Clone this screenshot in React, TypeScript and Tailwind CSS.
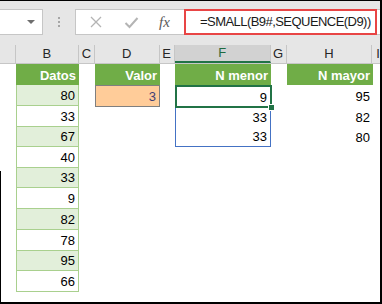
import React from 'react'

const rowHeights = [21, 21, 21, 20, 21, 20, 21, 21, 21, 20, 21]
const datos = [80, 33, 67, 40, 33, 9, 82, 78, 95, 66]
const menor = [9, 33, 33]
const mayor = [95, 82, 80]

const cellText = 'flex items-end justify-end pr-[3px] pb-[2px] leading-[15px] text-[13px]'

function HeaderCell({ label, width, selected }: { label: string; width: string; selected?: boolean }) {
  return (
    <div
      className={`${width} h-full flex items-center justify-center border-r border-[#c6c6c6] text-[13px] ${
        selected ? 'bg-[#d2d2d2] text-[#1e6b41] border-b-2 border-b-[#217346]' : 'text-[#262626]'
      }`}
    >
      {label}
    </div>
  )
}

function GreenHead({ label }: { label: string }) {
  return (
    <div className={`${cellText} bg-[#70ad47] text-white font-bold`} style={{ height: rowHeights[0] }}>
      {label}
    </div>
  )
}

export default function App() {
  return (
    <div
      className="relative w-[382px] h-[304px] overflow-hidden bg-white border-t border-r-2 border-b-2 border-black text-black"
      style={{ fontFamily: '"Liberation Sans", Arial, sans-serif' }}
    >
      {/* left frame line, only on the lower part */}
      <div className="absolute left-0 top-[170px] bottom-0 w-px bg-black" />

      {/* formula bar */}
      <div className="h-[44px] bg-[#e6e6e6] flex items-start pt-[8px]">
        <div className="relative w-[43px] h-[26px] bg-white border border-l-0 border-[#c6c6c6]">
          <div className="absolute right-[7px] top-[10px] w-0 h-0 border-l-[4px] border-r-[4px] border-t-[4px] border-l-transparent border-r-transparent border-t-[#6e6e6e]" />
        </div>
        <div className="w-[32px] h-[26px] flex flex-col items-center justify-center gap-[2px]">
          <div className="w-[2px] h-[2px] bg-[#a6a6a6]" />
          <div className="w-[2px] h-[2px] bg-[#a6a6a6]" />
          <div className="w-[2px] h-[2px] bg-[#a6a6a6]" />
        </div>
        <div className="flex-1 h-[26px] bg-white border border-r-0 border-[#c6c6c6] flex items-center">
          <div className="w-[108px] flex items-center">
            <svg width="14" height="14" viewBox="0 0 14 14" className="ml-[13px]">
              <path d="M2 2 L12 12 M12 2 L2 12" stroke="#b4b4b4" strokeWidth="1.3" fill="none" />
            </svg>
            <svg width="15" height="13" viewBox="0 0 15 13" className="ml-[21px]">
              <path d="M1.5 7 L5.5 11 L13.5 2" stroke="#b4b4b4" strokeWidth="2" fill="none" />
            </svg>
            <span
              className="ml-[20px] italic text-[15px] text-[#5a5a5a] leading-none"
              style={{ fontFamily: '"Liberation Serif", "Times New Roman", serif' }}
            >
              fx
            </span>
          </div>
          <div className="w-[193px] h-[26px] -my-px border-2 border-[#e84545] flex items-center pl-[14px] text-[13px] tracking-[-0.55px] text-[#1a1a1a]">
            =SMALL(B9#,SEQUENCE(D9))
          </div>
        </div>
      </div>

      {/* column headers */}
      <div className="h-[19px] bg-[#e6e6e6] flex border-b border-[#c6c6c6]">
        <HeaderCell label="" width="w-[16px]" />
        <HeaderCell label="B" width="w-[63px]" />
        <HeaderCell label="C" width="w-[16px]" />
        <HeaderCell label="D" width="w-[65px]" />
        <HeaderCell label="E" width="w-[15px]" />
        <HeaderCell label="F" width="w-[96px]" selected />
        <HeaderCell label="G" width="w-[16px]" />
        <HeaderCell label="H" width="w-[86px]" />
        <div className="flex-1 flex items-center pl-[4px] text-[13px] text-[#262626]">I</div>
      </div>

      {/* sheet body */}
      <div className="flex">
        <div className="w-[16px]" />

        {/* B: Datos */}
        <div className="w-[63px] flex flex-col">
          <GreenHead label="Datos" />
          {datos.map((v, i) => (
            <div
              key={i}
              className={`${cellText} border-x border-b border-[#a9d08e] ${i % 2 === 0 ? 'bg-[#e2efda]' : 'bg-white'}`}
              style={{ height: rowHeights[i + 1] }}
            >
              {v}
            </div>
          ))}
        </div>

        <div className="w-[16px]" />

        {/* D: Valor */}
        <div className="w-[65px] flex flex-col">
          <GreenHead label="Valor" />
          <div
            className={`${cellText} bg-[#ffcc99] border border-[#7f7f7f] text-[#3f3f76]`}
            style={{ height: rowHeights[1] + 1 }}
          >
            3
          </div>
        </div>

        <div className="w-[15px]" />

        {/* F: N menor */}
        <div className="w-[96px] flex flex-col">
          <GreenHead label="N menor" />
          <div className="relative border border-[#4472c4]">
            {menor.map((v, i) => (
              <div key={i} className={cellText} style={{ height: rowHeights[i + 1] - (i === 1 ? 1 : 0) - (i === 2 ? 1 : 0) }}>
                {v}
              </div>
            ))}
            <div className="absolute -left-px -top-px w-[97px] h-[23px] border-2 border-[#217346]" />
            <div className="absolute left-[92px] top-[18px] w-[7px] h-[7px] bg-[#217346] border border-white" />
          </div>
        </div>

        <div className="w-[16px]" />

        {/* H: N mayor */}
        <div className="w-[86px] flex flex-col">
          <GreenHead label="N mayor" />
          {mayor.map((v, i) => (
            <div key={i} className={cellText} style={{ height: rowHeights[i + 1] }}>
              {v}
            </div>
          ))}
        </div>
      </div>
    </div>
  )
}
